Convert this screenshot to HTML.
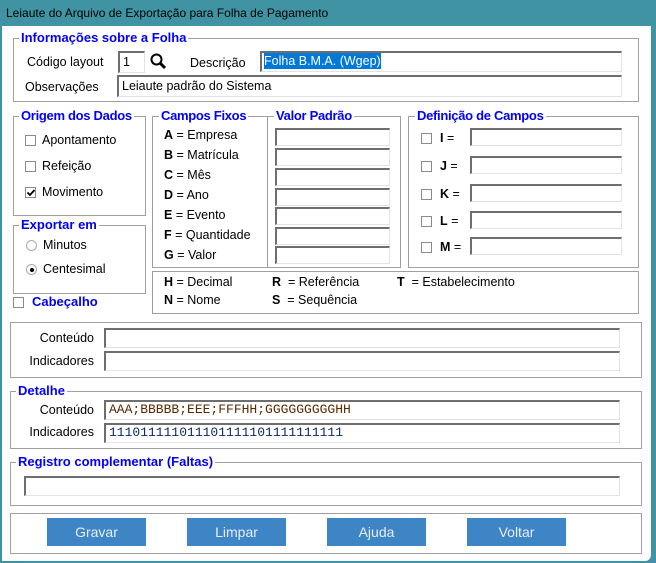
<!DOCTYPE html><html><head><style>
*{margin:0;padding:0;box-sizing:border-box}
body{width:656px;height:563px;background:#3f93a3;position:relative;overflow:hidden;font-family:"Liberation Sans",sans-serif;font-size:12.5px;color:#000}
.a{position:absolute}
#win{position:absolute;left:2px;top:26px;width:649px;height:535px;background:#fff;border-bottom-right-radius:6px}
.t{position:absolute;left:6px;top:6px;font-size:12px;color:#000}
.g{position:absolute;border:1px solid #a0a0a0}
.lg{position:absolute;background:#fff;color:#0000ff;font-weight:bold;font-size:13px;padding:0 2px;line-height:14px;letter-spacing:0}
.in{position:absolute;border:1px solid #e3e3e3;border-top:2px solid #6e6e6e;border-left:2px solid #6e6e6e;background:#fff;height:20px}
.cb{position:absolute;width:11px;height:11px;border:1px solid #8a8a8a;background:#fff}
.l{position:absolute;white-space:nowrap;line-height:15px}
.btn{position:absolute;top:518px;width:99px;height:28px;background:#3e85c6;color:#e6eef6;font-size:14px;text-align:center;line-height:28px}
.mono{font-family:"Liberation Mono",monospace;font-size:13px;padding-left:3px;line-height:16px}
</style></head><body>
<div class="t">Leiaute do Arquivo de Exportação para Folha de Pagamento</div>
<div id="win"></div>
<div class="g" style="left:13px;top:38px;width:626px;height:64px"></div>
<div class="lg" style="left:19px;top:31px">Informações sobre a Folha</div>
<div class="l" style="left:27px;top:55px">Código layout</div>
<div class="in" style="left:118px;top:51px;width:27px;height:22px;padding-left:3px;line-height:18px">1</div>
<svg class="a" style="left:150px;top:53px" width="18" height="18"><circle cx="6.5" cy="6.5" r="5" fill="none" stroke="#000" stroke-width="2"/><line x1="10" y1="10" x2="15" y2="15" stroke="#000" stroke-width="3"/></svg>
<div class="l" style="left:190px;top:56px">Descrição</div>
<div class="in" style="left:260px;top:51px;width:362px;height:21px;padding-left:2px"><span style="background:#0078d7;color:#fff;line-height:16px;display:inline-block">Folha B.M.A. (Wgep)</span></div>
<div class="l" style="left:25px;top:80px">Observações</div>
<div class="in" style="left:117px;top:75px;width:505px;height:22px;padding-left:3px;line-height:18px">Leiaute padrão do Sistema</div>
<div class="g" style="left:13px;top:116px;width:133px;height:100px"></div>
<div class="lg" style="left:19px;top:109px;letter-spacing:-0.3px">Origem dos Dados</div>
<div class="cb" style="left:25px;top:135px"></div><div class="l" style="left:42px;top:133px">Apontamento</div>
<div class="cb" style="left:25px;top:161px"></div><div class="l" style="left:42px;top:159px">Refeição</div>
<div class="cb" style="left:25px;top:187px"></div><div class="l" style="left:42px;top:185px">Movimento</div>
<svg class="a" style="left:26px;top:188px" width="10" height="10"><path d="M1.5 4.5 L4 7 L8.5 2" fill="none" stroke="#000" stroke-width="1.8"/></svg>
<div class="g" style="left:13px;top:225px;width:133px;height:69px"></div>
<div class="lg" style="left:19px;top:218px">Exportar em</div>
<div class="a" style="left:26px;top:240px;width:11px;height:11px;border-radius:50%;border:1px solid #aaa"></div><div class="l" style="left:43px;top:238px">Minutos</div>
<div class="a" style="left:26px;top:264px;width:11px;height:11px;border-radius:50%;border:1px solid #aaa"></div><div class="a" style="left:30px;top:268px;width:4px;height:4px;border-radius:50%;background:#000"></div><div class="l" style="left:43px;top:262px">Centesimal</div>
<div class="cb" style="left:13px;top:297px"></div>
<div class="lg" style="left:30px;top:295px">Cabeçalho</div>
<div class="g" style="left:152px;top:116px;width:249px;height:152px"></div>
<div class="a" style="left:267px;top:116px;width:1px;height:152px;background:#a0a0a0"></div>
<div class="lg" style="left:159px;top:109px;letter-spacing:-0.3px">Campos Fixos</div>
<div class="lg" style="left:274px;top:109px;letter-spacing:-0.3px">Valor Padrão</div>
<div class="l" style="left:164px;top:128px"><b>A</b> = Empresa</div>
<div class="l" style="left:164px;top:148px"><b>B</b> = Matrícula</div>
<div class="l" style="left:164px;top:168px"><b>C</b> = Mês</div>
<div class="l" style="left:164px;top:188px"><b>D</b> = Ano</div>
<div class="l" style="left:164px;top:208px"><b>E</b> = Evento</div>
<div class="l" style="left:164px;top:228px"><b>F</b> = Quantidade</div>
<div class="l" style="left:164px;top:248px"><b>G</b> = Valor</div>
<div class="in" style="left:275px;top:128px;width:115px;height:18px"></div>
<div class="in" style="left:275px;top:148px;width:115px;height:18px"></div>
<div class="in" style="left:275px;top:168px;width:115px;height:18px"></div>
<div class="in" style="left:275px;top:188px;width:115px;height:18px"></div>
<div class="in" style="left:275px;top:207px;width:115px;height:18px"></div>
<div class="in" style="left:275px;top:227px;width:115px;height:18px"></div>
<div class="in" style="left:275px;top:246px;width:115px;height:18px"></div>
<div class="g" style="left:408px;top:116px;width:231px;height:152px"></div>
<div class="lg" style="left:415px;top:109px;letter-spacing:-0.3px">Definição de Campos</div>
<div class="cb" style="left:421px;top:133px"></div><div class="l" style="left:440px;top:131px"><b>I</b> =</div><div class="in" style="left:470px;top:128px;width:152px;height:18px"></div>
<div class="cb" style="left:421px;top:161px"></div><div class="l" style="left:440px;top:159px"><b>J</b> =</div><div class="in" style="left:470px;top:156px;width:152px;height:18px"></div>
<div class="cb" style="left:421px;top:189px"></div><div class="l" style="left:440px;top:187px"><b>K</b> =</div><div class="in" style="left:470px;top:184px;width:152px;height:18px"></div>
<div class="cb" style="left:421px;top:216px"></div><div class="l" style="left:440px;top:214px"><b>L</b> =</div><div class="in" style="left:470px;top:211px;width:152px;height:18px"></div>
<div class="cb" style="left:421px;top:242px"></div><div class="l" style="left:440px;top:240px"><b>M</b> =</div><div class="in" style="left:470px;top:237px;width:152px;height:18px"></div>
<div class="g" style="left:152px;top:271px;width:487px;height:43px"></div>
<div class="l" style="left:164px;top:275px"><b>H</b> = Decimal</div>
<div class="l" style="left:164px;top:293px"><b>N</b> = Nome</div>
<div class="l" style="left:272px;top:275px"><b>R</b> &nbsp;= Referência</div>
<div class="l" style="left:272px;top:293px"><b>S</b> &nbsp;= Sequência</div>
<div class="l" style="left:397px;top:275px"><b>T</b> &nbsp;= Estabelecimento</div>
<div class="g" style="left:10px;top:322px;width:632px;height:56px"></div>
<div class="l" style="left:20px;top:331px;width:74px;text-align:right">Conteúdo</div>
<div class="in" style="left:104px;top:328px;width:516px"></div>
<div class="l" style="left:20px;top:354px;width:74px;text-align:right">Indicadores</div>
<div class="in" style="left:104px;top:351px;width:516px"></div>
<div class="g" style="left:10px;top:391px;width:632px;height:58px"></div>
<div class="lg" style="left:16px;top:384px">Detalhe</div>
<div class="l" style="left:20px;top:403px;width:74px;text-align:right">Conteúdo</div>
<div class="in mono" style="left:104px;top:400px;width:516px;color:#5a2a00">AAA;BBBBB;EEE;FFFHH;GGGGGGGGGHH</div>
<div class="l" style="left:20px;top:425px;width:74px;text-align:right">Indicadores</div>
<div class="in mono" style="left:104px;top:423px;width:516px;color:#0a2a6a">111011111011101111101111111111</div>
<div class="g" style="left:10px;top:462px;width:632px;height:44px"></div>
<div class="lg" style="left:16px;top:455px">Registro complementar (Faltas)</div>
<div class="in" style="left:24px;top:476px;width:596px"></div>
<div class="g" style="left:10px;top:513px;width:632px;height:41px"></div>
<div class="btn" style="left:47px">Gravar</div>
<div class="btn" style="left:187px">Limpar</div>
<div class="btn" style="left:327px">Ajuda</div>
<div class="btn" style="left:467px">Voltar</div>
</body></html>
